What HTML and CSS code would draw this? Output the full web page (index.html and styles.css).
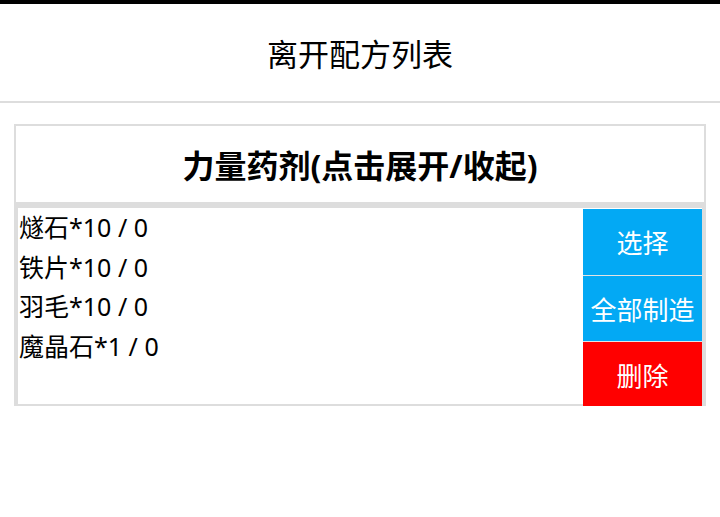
FILE: index.html
```html
<!DOCTYPE html>
<html lang="zh-CN">
<head>
    <meta charset="UTF-8">
    <meta name="viewport" content="width=device-width, initial-scale=1.0">
    <title>配方列表</title>
    <link rel="stylesheet" href="styles.css">
</head>
<body>
    <div class="topbar"></div>
    <header class="header">
        <h1>离开配方列表</h1>
    </header>

    <div class="card">
        <div class="card-head" onclick="toggleBody()">力量药剂(点击展开/收起)</div>
        <div class="card-body" id="cardBody">
            <div class="items">
                <div class="item">燧石*10 / 0</div>
                <div class="item">铁片*10 / 0</div>
                <div class="item">羽毛*10 / 0</div>
                <div class="item">魔晶石*1 / 0</div>
            </div>
            <div class="actions">
                <button class="btn">选择</button>
                <button class="btn">全部制造</button>
                <button class="btn btn-danger">删除</button>
            </div>
        </div>
    </div>

    <script>
        function toggleBody() {
            const body = document.getElementById('cardBody');
            body.style.display = body.style.display === 'none' ? '' : 'none';
        }
    </script>
</body>
</html>
```

FILE: styles.css
```css
:root {
    --border-color: #dddddd;
    --blue: #03a9f4;
    --red: #ff0000;
}

body {
    margin: 0;
    font-family: "Noto Sans", "Noto Sans CJK SC", sans-serif;
    color: #000;
    background: #fff;
}

.topbar {
    height: 4px;
    background: #000;
}

.header {
    height: 97px;
    display: flex;
    align-items: center;
    justify-content: center;
    border-bottom: 2px solid var(--border-color);
}

.header h1 {
    margin: 0;
    font-size: 31px;
    font-weight: normal;
}

.card {
    margin: 21px 14px 0;
    border: 2px solid var(--border-color);
}

.card-head {
    height: 76px;
    display: flex;
    align-items: center;
    justify-content: center;
    font-size: 32px;
    font-weight: bold;
    border-bottom: 6px solid var(--border-color);
    cursor: pointer;
}

.card-body {
    display: flex;
    height: 196px;
    border-left: 2px solid var(--border-color);
    border-right: 2px solid var(--border-color);
}

.items {
    flex: 1;
    padding-left: 1px;
}

.item {
    font-size: 25px;
    line-height: 39.5px;
}

.actions {
    width: 119px;
    margin-top: 1px;
    display: flex;
    flex-direction: column;
}

.btn {
    flex-shrink: 0;
    height: 66px;
    border: none;
    padding: 0;
    background: var(--blue);
    color: #fff;
    font-family: inherit;
    font-size: 26px;
    cursor: pointer;
}

.btn + .btn {
    border-top: 1px solid #e3e3e3;
}

.btn-danger {
    background: var(--red);
}
```
